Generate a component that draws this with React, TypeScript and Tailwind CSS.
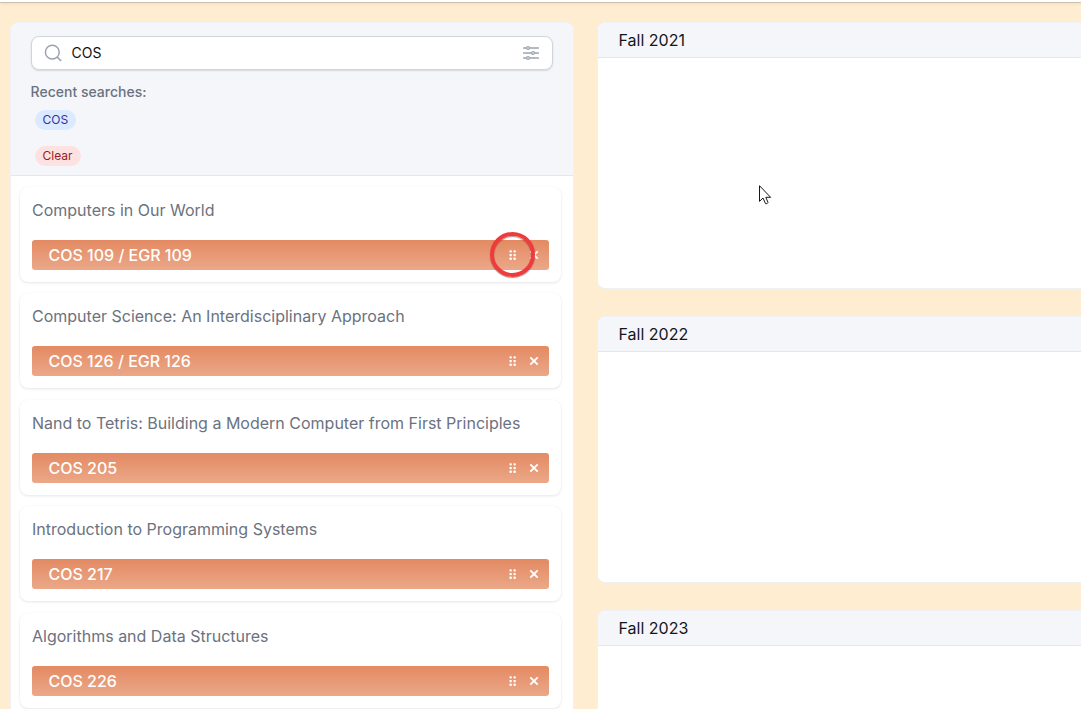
const courses = [
  { title: "Computers in Our World", code: "COS 109 / EGR 109" },
  { title: "Computer Science: An Interdisciplinary Approach", code: "COS 126 / EGR 126" },
  { title: "Nand to Tetris: Building a Modern Computer from First Principles", code: "COS 205" },
  { title: "Introduction to Programming Systems", code: "COS 217" },
  { title: "Algorithms and Data Structures", code: "COS 226" },
];

const semesters = ["Fall 2021", "Fall 2022", "Fall 2023"];

function SearchIcon() {
  return (
    <svg className="h-5 w-5 shrink-0" viewBox="0 0 20 20" fill="none" stroke="#9ca3af" strokeWidth="1.5">
      <circle cx="9.3" cy="9.2" r="6.9" />
      <path d="M14.2 14.1L18.2 18" />
    </svg>
  );
}

function SlidersIcon() {
  return (
    <svg className="h-5 w-5 shrink-0" viewBox="0 0 20 20" fill="none" stroke="#9ca3af">
      <path d="M2.6 5H5.4M8.6 5H17.4M2.6 10H10.4M13.6 10H17.4M2.6 15H5.4M8.6 15H17.4" strokeWidth="1.5" strokeLinecap="round" />
      <circle cx="7" cy="5" r="1.4" strokeWidth="1.2" />
      <circle cx="12" cy="10" r="1.4" strokeWidth="1.2" />
      <circle cx="7" cy="15" r="1.4" strokeWidth="1.2" />
    </svg>
  );
}

function GripIcon() {
  return (
    <svg className="h-[10px] w-[7px]" viewBox="0 0 7 10" fill="#fff">
      {[0.2, 3.9, 7.6].map((y) => (
        <g key={y}>
          <rect x="0.5" y={y} width="2.3" height="2.3" rx="0.7" />
          <rect x="4.5" y={y} width="2.3" height="2.3" rx="0.7" />
        </g>
      ))}
    </svg>
  );
}

function CloseIcon() {
  return (
    <svg className="h-[10px] w-[10px]" viewBox="0 0 10 10" fill="none" stroke="#fff" strokeWidth="1.9">
      <path d="M1.3 1.3L8.7 8.7M8.7 1.3L1.3 8.7" />
    </svg>
  );
}

function CourseCard({ title, code, marked }: { title: string; code: string; marked: boolean }) {
  return (
    <li className="h-[95.2px] shrink-0 rounded-lg bg-white px-3 pt-[10.9px] shadow-[0_1px_3px_rgba(0,0,0,0.1),0_0_1px_rgba(0,0,0,0.04)]">
      <div className="h-6 whitespace-nowrap text-base leading-6 text-[#6b7280]">{title}</div>
      <div className="relative mt-[18.3px] flex h-[30px] items-center rounded-[3px] bg-linear-to-b from-[#e38a62] to-[#eba888] pl-[16.5px] pr-[10px] text-white">
        <span className="flex-1 text-base font-medium leading-6">{code}</span>
        <GripIcon />
        <span className="ml-[13.5px]"><CloseIcon /></span>
        {marked && (
          <span className="absolute -top-[8px] right-[14px] h-[45px] w-[45px] rounded-full border-4 border-[#ef3b3b] shadow-[0_1px_1px_rgba(70,50,50,0.5),inset_0_1px_1px_rgba(70,50,50,0.5)]" />
        )}
      </div>
    </li>
  );
}

export default function App() {
  return (
    <div className="relative flex h-[709px] w-[1081px] flex-col overflow-hidden bg-[#feedd1] font-['Inter',sans-serif]">
      <header className="h-[2px] shrink-0 bg-white shadow-[0_1px_1px_rgba(0,0,0,0.18),0_1px_4px_rgba(0,0,0,0.1)]" />
      <main className="flex min-h-0 flex-1 pl-[10px] pt-5">
        <section className="h-[800px] w-[564px] shrink-0 overflow-hidden rounded-lg border border-[#eff1f5] bg-white">
          <div className="h-[153px] border-b border-[#e5e7eb] bg-[#f4f6fa] px-5 pt-[13px]">
            <div className="flex h-[34px] items-center rounded-lg border border-[#d1d5db] bg-white pl-[11px] pr-[11px] shadow-[0_1px_2px_rgba(0,0,0,0.12)]">
              <SearchIcon />
              <span className="ml-[8.5px] flex-1 text-sm leading-5 text-[#111111]">COS</span>
              <SlidersIcon />
            </div>
            <div className="-ml-[0.4px] mt-3 text-sm font-medium leading-5 text-[#6b7280]">Recent searches:</div>
            <div className="ml-1 mt-2 flex flex-col items-start gap-4 text-xs leading-4">
              <span className="rounded-full bg-[#dbeafe] py-0.5 pl-[7.5px] pr-[7.5px] text-[#3730a3]">COS</span>
              <span className="rounded-full bg-[#fee2e2] py-0.5 pl-[7.5px] pr-[8.5px] text-[#991b1b]">Clear</span>
            </div>
          </div>
          <ul className="flex flex-col gap-[11.3px] pl-[9px] pr-3 pt-[10.7px]">
            {courses.map((course, index) => (
              <CourseCard key={course.code} title={course.title} code={course.code} marked={index === 0} />
            ))}
          </ul>
        </section>
        <div className="ml-[23px] flex flex-1 flex-col gap-[27px]">
          {semesters.map((name) => (
            <section key={name} className="h-[267px] w-[600px] shrink-0 overflow-hidden rounded-lg border border-[#eff1f5] bg-white">
              <h2 className="h-[35px] border-b border-[#e5e7eb] bg-[#f4f6fa] pl-[20.5px] pt-[5px] text-base leading-6 text-[#15151c]">{name}</h2>
            </section>
          ))}
        </div>
      </main>
      <svg className="absolute left-[759px] top-[185px] h-[20px] w-[13px]" viewBox="0 0 13 20">
        <path d="M0.5 0.7V16.4L4 13L6.5 18.6Q8 19.6 9 17.4L6.8 12.3H11.6Z" fill="#fff" stroke="#16161c" strokeWidth="1" />
      </svg>
    </div>
  );
}
